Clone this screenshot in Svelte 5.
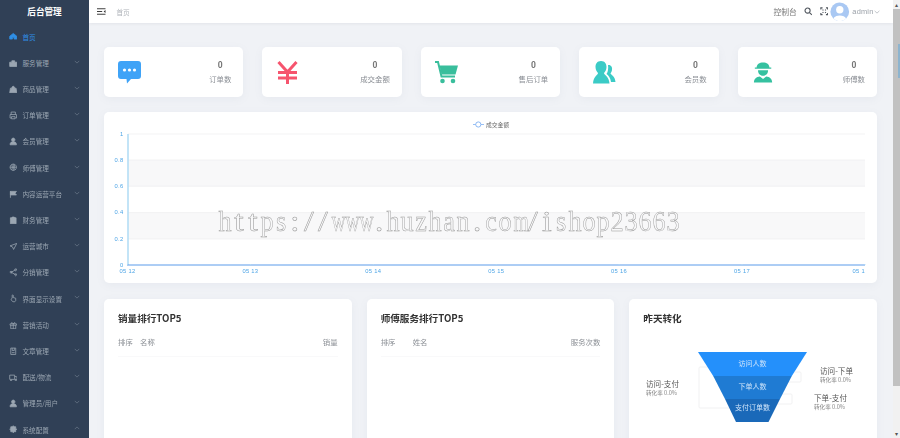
<script>
  const menu = [
    ['首页', 'home'], ['服务管理', 'case'], ['商品管理', 'bag'], ['订单管理', 'print'],
    ['会员管理', 'user'], ['师傅管理', 'globe'], ['内容运营平台', 'flag'], ['财务管理', 'clip'],
    ['运营城市', 'send'], ['分销管理', 'share'], ['界面显示设置', 'hand'], ['营销活动', 'gift'],
    ['文章管理', 'book'], ['配送/物流', 'truck'], ['管理员/用户', 'user'], ['系统配置', 'gear']
  ];
  const icons = {
    home: 'M1 6 L6 2 L11 6 V10 H7.2 V7.5 H4.8 V10 H1 Z',
    case: 'M4 2.5 H8 V4.5 H11 V10.5 H1 V4.5 H4 Z M1 7 H11',
    bag: 'M2 4.5 H10 L11 11 H1 Z M4 4.5 C4 1 8 1 8 4.5',
    print: 'M3 5 V1.5 H9 V5 M1.5 10 V5 H10.5 V10 H9 M3 10 H1.5 M3.5 8 H8.5 V11 H3.5 Z',
    user: 'M6 1.5 A2.4 2.4 0 1 1 5.99 1.5 Z M1.5 11 C1.5 7.5 3.5 6.8 6 6.8 C8.5 6.8 10.5 7.5 10.5 11 Z',
    globe: 'M6 1.5 A4.5 4.5 0 1 1 5.99 1.5 Z M6 1.5 V10.5 M1.5 6 H10.5 M3.6 2.5 C5 5 5 7 3.6 9.5 M8.4 2.5 C7 5 7 7 8.4 9.5',
    flag: 'M2 1.5 V11 M2 2 H10.5 L8.5 4.5 L10.5 7 H2 Z',
    clip: 'M2 2.5 H10 V11 H2 Z M4.5 1.5 H7.5 V3.5 H4.5 Z',
    send: 'M11 2 L1.5 5.5 L5 7 L6.5 10.5 Z',
    share: 'M9.5 2.5 L3 6 L9.5 9.5 M9.5 1.2 A1.3 1.3 0 1 1 9.49 1.2 Z M3 4.7 A1.3 1.3 0 1 1 2.99 4.7 Z M9.5 8.2 A1.3 1.3 0 1 1 9.49 8.2 Z',
    hand: 'M4.5 6 V2 C4.5 1 6 1 6 2 V5 L9.5 6 V9 C9.5 10 8.5 11 7 11 C5 11 4 10 2.8 7.5 L4.5 6',
    gift: 'M1.5 4 H10.5 V6 H1.5 Z M2.5 6 V11 H9.5 V6 M6 4 V11 M6 4 C4 1 2.5 2.5 4 4 M6 4 C8 1 9.5 2.5 8 4',
    book: 'M2.5 1.5 H9.5 V10.5 H2.5 Z M4.5 1.5 V5 H7.5 V1.5 M4 8 H8',
    truck: 'M1 3 H8 V9 H1 Z M8 5 H10.5 L11.5 7 V9 H8 M3 9.8 A.8 .8 0 1 0 3.01 9.8 M9.5 9.8 A.8 .8 0 1 0 9.51 9.8',
    gear: 'M6 1 L7.2 2.5 L9.5 2.5 L9.5 4.8 L11 6 L9.5 7.2 L9.5 9.5 L7.2 9.5 L6 11 L4.8 9.5 L2.5 9.5 L2.5 7.2 L1 6 L2.5 4.8 L2.5 2.5 L4.8 2.5 Z'
  };
  const solid = new Set(['home', 'case', 'bag', 'user', 'flag', 'clip', 'gear']);
  const stats = [
    ['订单数', 'chat'], ['成交金额', 'yen'], ['售后订单', 'cart'], ['会员数', 'users'], ['师傅数', 'worker']
  ];
  const grid = [134, 160, 186.2, 212.6, 239, 265];
  const yLabels = ['1', '0.8', '0.6', '0.4', '0.2', '0'];
  const xTicks = [127.5, 250.4, 373.3, 496.2, 619.1, 742, 865];
  const xLabels = ['05 12', '05 13', '05 14', '05 15', '05 16', '05 17', '05 1'];
  const mark = [...'https://www.huzhan.com/ishop23663'];
  const narrow = new Set([...'ti:/.']);
</script>

<div class="app">
  <aside class="side">
    <div class="brand">后台管理</div>
    {#each menu as [label, icon], i}
      <div class="item" class:active={i === 0}>
        <svg class="mi" viewBox="0 0 12 12" class:solid={solid.has(icon)}><path d={icons[icon]} /></svg>
        <span class="ml">{label}</span>
        {#if i > 0}
          <svg class="chev" class:up={i === 15} viewBox="0 0 8 5"><path d="M1 1 L4 4 L7 1" /></svg>
        {/if}
      </div>
    {/each}
  </aside>

  <div class="main">
    <header class="top">
      <svg class="burger" viewBox="0 0 9 7"><path d="M0 .6 H9 M0 3.5 H5.5 M0 6.4 H9" /><path class="fill" d="M9 2 V5 L7 3.5 Z" /></svg>
      <span class="crumb">首页</span>
      <div class="right">
        <span class="console">控制台</span>
        <svg class="tool" viewBox="0 0 10 10"><circle cx="4.2" cy="4.2" r="3" /><path d="M6.5 6.5 L9.3 9.3" /></svg>
        <svg class="tool" viewBox="0 0 10 10"><path d="M1 3 V1 H3 M7 1 H9 V3 M9 7 V9 H7 M3 9 H1 V7" /><path d="M3 3 L4 4 M7 3 L6 4 M7 7 L6 6 M3 7 L4 6" /></svg>
        <svg class="avatar" viewBox="0 0 20 20">
          <circle cx="10" cy="10" r="9.6" fill="#a9c8f3" />
          <circle cx="10" cy="8" r="3.8" fill="#fff" />
          <path d="M3.5 17 C5 12.8 15 12.8 16.5 17 C13 20.5 7 20.5 3.5 17 Z" fill="#fff" />
        </svg>
        <span class="admin">admin</span>
        <svg class="achev" viewBox="0 0 8 5"><path d="M.8 1 L4 4 L7.2 1" /></svg>
      </div>
    </header>

    <main class="content">
      <section class="stats">
        {#each stats as [label, icon]}
          <div class="card stat">
            {#if icon === 'chat'}
              <svg class="si" viewBox="0 0 23 23"><path fill="#3fa3f7" d="M3 0 H20 A3 3 0 0 1 23 3 V15 A3 3 0 0 1 20 18 H13 L9 22.5 L8.5 18 H3 A3 3 0 0 1 0 15 V3 A3 3 0 0 1 3 0 Z" /><circle cx="6.5" cy="9" r="1.6" fill="#fff" /><circle cx="11.5" cy="9" r="1.6" fill="#fff" /><circle cx="16.5" cy="9" r="1.6" fill="#fff" /></svg>
            {:else if icon === 'yen'}
              <svg class="si" viewBox="0 0 23 23"><path fill="none" stroke="#f6546e" stroke-width="3" d="M2.5 1 L11.5 11 L20.5 1 M11.5 11 V23 M2 11.5 H21 M2 17 H21" /></svg>
            {:else if icon === 'cart'}
              <svg class="si" viewBox="0 0 23 23"><path fill="none" stroke="#39be9c" stroke-width="2" d="M0 1 H3 L6.5 15.5 H20" /><path fill="#39be9c" d="M4.5 4.5 H23 L20.5 13.5 H6.5 Z" /><circle cx="7.5" cy="20" r="2.3" fill="#39be9c" /><circle cx="18" cy="20" r="2.3" fill="#39be9c" /></svg>
            {:else if icon === 'users'}
              <svg class="si" viewBox="0 0 23 23"><path fill="#3bcbc6" d="M8 0 C12 0 13.5 3 13.5 6 C13.5 9 12 11 11 12 C11 14 16 15 16.5 22.5 H0 C0.5 15 5 14 5 12 C4 11 2.5 9 2.5 6 C2.5 3 4 0 8 0 Z" /><path fill="#3bcbc6" d="M15 4 C18 3.5 19.5 6 19 9 C18.8 10.5 18 11.5 17.5 12.5 C18 14 22 15 22.5 21 H18 C17.5 16.5 15 14 13.5 13 C15 11 15.5 7 15 4 Z" /></svg>
            {:else}
              <svg class="si worker" viewBox="0 0 23 23"><path fill="#35c1a0" d="M4 6 C4 2.5 7 .5 11 .5 C15 .5 18 2.5 18 6 H20 V7.5 H2 V6 Z M5.5 9 H16.5 C16.5 12.5 14.5 15 11 15 C7.5 15 5.5 12.5 5.5 9 Z M1 22.5 C1 18.5 4 16.5 7.5 16 L11 18.5 L14.5 16 C18 16.5 21 18.5 21 22.5 Z" /></svg>
            {/if}
            <div class="nums">
              <div class="n">0</div>
              <div class="l">{label}</div>
            </div>
          </div>
        {/each}
      </section>

      <section class="card chart">
        <svg viewBox="104 112 773 171" class="chart-svg">
          <rect x="128" y="160" width="737" height="26.2" fill="#f8f8f9" />
          <rect x="128" y="212.6" width="737" height="26.4" fill="#f8f8f9" />
          {#each grid.slice(0, 5) as y}
            <line x1="128" x2="865" y1={y} y2={y} stroke="#eeeeef" stroke-width=".7" />
          {/each}
          <line x1="128" x2="128" y1="134" y2="265" stroke="#b4def5" stroke-width="1.6" />
          <line x1="127" x2="865" y1="265" y2="265" stroke="#5a9bea" stroke-width="1" />
          {#each grid as y, i}
            <text class="ax" x="123.5" y={y + 1.5} text-anchor="end">{yLabels[i]}</text>
          {/each}
          {#each xTicks as x, i}
            <line x1={x} x2={x} y1="264" y2="265" stroke="#b4def5" stroke-width=".8" />
            <text class="ax" x={x} y="272.5" text-anchor={i === 6 ? 'end' : 'middle'}>{xLabels[i]}</text>
          {/each}
          <line x1="473" x2="484" y1="124.5" y2="124.5" stroke="#7fb0f2" stroke-width=".8" />
          <circle cx="478.3" cy="124.5" r="2.6" fill="#fff" stroke="#7fb0f2" stroke-width=".9" />
          <text class="lg" x="486" y="126.7">成交金额</text>
        </svg>
      </section>

      <section class="bottom">
        <div class="card panel">
          <h3>销量排行TOP5</h3>
          <div class="thead"><span class="c1">排序</span><span class="grow">名称</span><span>销量</span></div>
        </div>
        <div class="card panel">
          <h3>师傅服务排行TOP5</h3>
          <div class="thead"><span class="c2">排序</span><span class="grow">姓名</span><span>服务次数</span></div>
        </div>
        <div class="card panel">
          <h3>昨天转化</h3>
          <svg class="funnel" viewBox="630 335 247 103">
            <g fill="none" stroke="#eeeeef" stroke-width=".8">
              <path d="M730 367 H701 Q700 367 700 368 V407 Q700 408 701 408 H750" />
              <path d="M780 372 H801 Q802 372 802 373 V381 Q802 382 801 382 H780" />
              <path d="M770 394 H792 Q793 394 793 395 V403 Q793 404 792 404 H770" />
            </g>
            <path fill="#2490fb" d="M699 352 H808 L792.8 376 H714.2 Z" />
            <path fill="#1f7bd3" d="M714.2 376 H792.8 L781 399 H726 Z" />
            <path fill="#1a69b9" d="M726 399 H781 L769.5 422 H737 Z" />
            <text class="fw" x="753.5" y="365.5">访问人数</text>
            <text class="fw" x="753.5" y="388.5">下单人数</text>
            <text class="fw" x="753.5" y="410">支付订单数</text>
            <text class="ft" x="647" y="387">访问-支付</text>
            <text class="fs" x="647" y="395">转化率 0.0%</text>
            <text class="ft" x="821" y="374">访问-下单</text>
            <text class="fs" x="821" y="382">转化率 0.0%</text>
            <text class="ft" x="815" y="401">下单-支付</text>
            <text class="fs" x="815" y="409">转化率 0.0%</text>
          </svg>
        </div>
      </section>
    </main>
  </div>

  <div class="bar">
    <span class="arrow">▴</span>
    <div class="thumb"></div>
    <span class="arrow">▾</span>
  </div>

  <div class="mark" aria-label="https://www.huzhan.com/ishop23663">
    {#each mark as ch}<span class="ch" class:wide={ch === 'w' || ch === 'm'} class:thin={narrow.has(ch)}>{ch}</span>{/each}
  </div>
</div>

<style>
  :global(body) { margin: 0; background: #f0f2f6; }
  .app {
    position: relative;
    display: flex;
    width: 900px;
    height: 438px;
    overflow: hidden;
    font-family: "Noto Sans CJK SC", "Liberation Sans", sans-serif;
    filter: blur(.35px);
  }
  .side { flex: none; width: 89px; background: #304056; color: #9ba6b2; }
  .brand { height: 23.6px; line-height: 23.6px; text-align: center; color: #fff; font-size: 8.6px; font-weight: 700; }
  .item { display: flex; align-items: center; height: 26.2px; padding-left: 8.5px; font-size: 6.6px; position: relative; }
  .item.active { color: #2f8fe6; }
  .mi { width: 8.5px; height: 8.5px; margin-right: 5.5px; fill: none; stroke: currentColor; stroke-width: 1.1; }
  .mi.solid { fill: currentColor; }
  .ml { white-space: nowrap; }
  .chev { position: absolute; left: 74px; top: 10px; width: 6px; height: 4px; fill: none; stroke: #6f7d8d; stroke-width: .9; }
  .chev.up { transform: rotate(180deg); }

  .main { flex: none; width: 804px; display: flex; flex-direction: column; overflow: hidden; }
  .top {
    flex: none; height: 23px; background: #fff; display: flex; align-items: center;
    box-shadow: 0 1px 3px rgba(0, 21, 41, .06); position: relative; z-index: 1;
  }
  .burger { width: 8.5px; height: 7px; margin-left: 8px; fill: none; stroke: #333; stroke-width: 1; }
  .burger .fill { fill: #333; stroke: none; }
  .crumb { margin-left: 11px; font-size: 6.6px; color: #b0b4ba; }
  .right { margin-left: auto; display: flex; align-items: center; padding-right: 13px; }
  .console { font-size: 7.8px; color: #777; margin-right: 7px; }
  .tool { width: 8.5px; height: 8.5px; margin-right: 7.5px; fill: none; stroke: #50565e; stroke-width: 1.3; }
  .avatar { width: 19.5px; height: 19.5px; margin-left: -5.5px; margin-right: 2.5px; }
  .admin { font-size: 7.4px; color: #9aa0a8; font-family: "Liberation Sans", sans-serif; letter-spacing: .2px; }
  .achev { width: 6px; height: 4px; margin-left: .5px; fill: none; stroke: #9aa0a8; stroke-width: .8; }

  .content { padding: 24px 16px 0 15px; display: flex; flex-direction: column; }
  .card { background: #fff; border-radius: 5px; box-shadow: 0 2px 8px rgba(120, 130, 160, .07); }
  .stats { display: grid; grid-template-columns: repeat(5, 1fr); gap: 19px; height: 50px; }
  .stat { display: flex; align-items: center; justify-content: space-between; padding: 0 12px 0 14px; }
  .si { flex: none; width: 23px; height: 23px; }
  .si.worker { margin-left: 1px; width: 21px; height: 21px; }
  .nums { text-align: center; color: #8a8e94; }
  .n { font-size: 8.5px; font-weight: 700; line-height: 13px; color: #777; font-family: "Roboto", sans-serif; }
  .l { font-size: 7.4px; line-height: 12px; margin-top: 1px; }

  .chart { margin-top: 15px; height: 171px; }
  .chart-svg { display: block; width: 773px; height: 171px; }
  .ax { font-size: 5.8px; fill: #4ea5e6; font-family: "Liberation Sans", sans-serif; letter-spacing: .3px; }
  .lg { font-size: 5.8px; fill: #666; }

  .bottom { margin-top: 16px; display: grid; grid-template-columns: repeat(3, minmax(0, 1fr)); gap: 15px; }
  .panel { height: 160px; padding: 0 14px; box-sizing: border-box; min-width: 0; }
  h3 { margin: 0; padding-top: 12px; font-size: 9.6px; line-height: 14px; font-weight: 700; color: #333; }
  .thead {
    display: flex; margin-top: 11px; padding-bottom: 8.5px; font-size: 7.4px; line-height: 11px; color: #8b8f95;
    border-bottom: 1px solid #f9f9fa;
  }
  .c1 { width: 22px; }
  .c2 { width: 32px; }
  .grow { flex: 1; }
  .funnel { display: block; width: 247px; height: 103px; margin: 10px -14px 0; }
  .fw { font-size: 7px; fill: #cfe4fa; text-anchor: middle; }
  .ft { font-size: 7.6px; fill: #555; }
  .fs { font-size: 5.6px; fill: #888; }

  .bar { flex: none; width: 7px; background: #f1f1f1; display: flex; flex-direction: column; align-items: center; }
  .arrow { height: 9px; font-size: 6px; line-height: 9px; color: #555; }
  .thumb { width: 7px; height: 377px; background: #c1c1c1; position: relative; }
  .thumb::after { content: ""; position: absolute; right: 0; top: 35px; width: 2px; height: 34px; background: #8db4cf; }
  .bar .arrow:last-child { margin-top: auto; }

  .mark {
    position: absolute; left: 218px; top: 205px; display: flex;
    font-family: "Liberation Serif", serif; font-size: 25px; line-height: 32px; white-space: nowrap;
    color: transparent; -webkit-text-stroke: .4px #999;
    transform: scaleY(1.2);
  }
  .ch { display: block; width: 14px; text-align: center; transform: scaleX(1.05); }
  .ch.wide { transform: scaleX(.78); }
  .ch.thin { transform: scaleX(1.4); }
</style>
